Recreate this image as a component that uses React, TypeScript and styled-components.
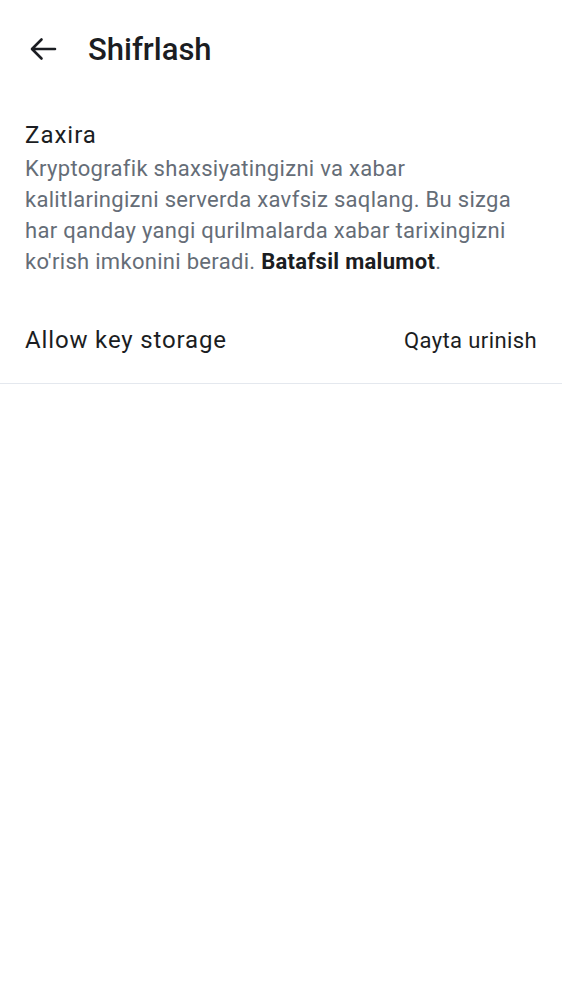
import React from 'react';
import styled, { createGlobalStyle } from 'styled-components';

const GlobalStyle = createGlobalStyle`
  html, body {
    margin: 0;
    padding: 0;
    background: #ffffff;
  }
  body {
    font-family: Roboto, "Noto Sans", sans-serif;
    color: #1b1d22;
  }
`;

const Page = styled.div`
  width: 562px;
  min-height: 1000px;
  background: #ffffff;
  display: flex;
  flex-direction: column;
`;

const TopBar = styled.header`
  height: 98px;
  display: flex;
  align-items: center;
  padding: 0 0 0 19px;
  gap: 21px;
`;

const BackButton = styled.button`
  width: 48px;
  height: 48px;
  display: flex;
  align-items: center;
  justify-content: center;
  border: none;
  background: transparent;
  padding: 0;
  color: #1b1d22;
  cursor: pointer;
`;

const Title = styled.h1`
  margin: 0;
  font-size: 31px;
  font-weight: 500;
  letter-spacing: 0;
  color: #1b1d22;
`;

const Section = styled.section`
  padding: 22px 25px 0;
`;

const SectionTitle = styled.h2`
  margin: 0;
  font-size: 24px;
  font-weight: 400;
  line-height: 30px;
  letter-spacing: 1px;
  color: #1b1d22;
`;

const Description = styled.p`
  margin: 3px 0 0;
  font-size: 22px;
  line-height: 31px;
  letter-spacing: 0.3px;
  color: #656d77;
`;

const Strong = styled.a`
  font-weight: 700;
  color: #1b1d22;
  text-decoration: none;
`;

const Row = styled.div`
  display: flex;
  align-items: center;
  justify-content: space-between;
  margin-top: 20px;
  padding: 0 25px;
  height: 86px;
  border-bottom: 1px solid #e4e8ee;
`;

const RowLabel = styled.span`
  font-size: 24px;
  letter-spacing: 0.85px;
  color: #1b1d22;
`;

const RowAction = styled.button`
  border: none;
  background: transparent;
  padding: 0;
  font-family: inherit;
  font-size: 22px;
  letter-spacing: 0.4px;
  color: #1b1d22;
  cursor: pointer;
`;

export default function App() {
  return (
    <Page>
      <GlobalStyle />
      <TopBar>
        <BackButton aria-label="Back">
          <svg width="36" height="36" viewBox="0 0 36 36" fill="none">
            <path
              d="M30 18H7.5M16.5 8.5L7 18l9.5 9.5"
              stroke="currentColor"
              strokeWidth="2.6"
              strokeLinecap="round"
              strokeLinejoin="round"
            />
          </svg>
        </BackButton>
        <Title>Shifrlash</Title>
      </TopBar>
      <Section>
        <SectionTitle>Zaxira</SectionTitle>
        <Description>
          Kryptografik shaxsiyatingizni va xabar kalitlaringizni serverda xavfsiz saqlang. Bu sizga har qanday yangi qurilmalarda xabar tarixingizni ko'rish imkonini beradi. <Strong href="#">Batafsil malumot</Strong>.
        </Description>
      </Section>
      <Row>
        <RowLabel>Allow key storage</RowLabel>
        <RowAction>Qayta urinish</RowAction>
      </Row>
    </Page>
  );
}
